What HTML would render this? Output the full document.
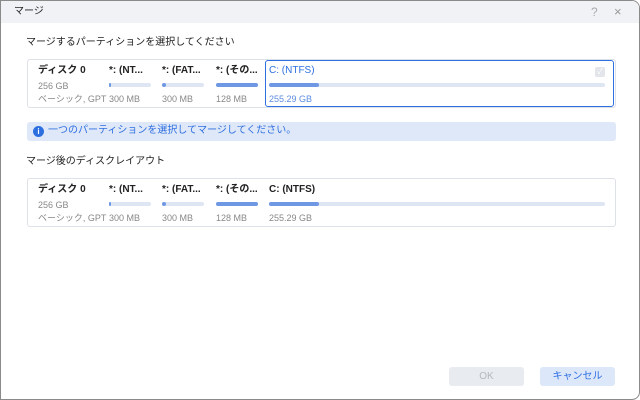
<!DOCTYPE html>
<html><head><meta charset="utf-8"><style>
*{margin:0;padding:0;box-sizing:border-box}
body{width:640px;height:400px;background:#fff;font-family:"Liberation Sans","Noto Sans CJK JP",sans-serif;position:relative;overflow:hidden}
.win{position:absolute;left:0;top:0;width:640px;height:400px;border:1px solid #8a8a8a;border-radius:0 8px 8px 0;background:#fff;overflow:hidden}
.tb{position:absolute;left:0;top:0;right:0;height:22px;background:#f0f2f6}
.t{position:absolute;font-size:10px;line-height:12px;color:#222;white-space:nowrap}
.box{position:absolute;left:26px;width:589px;height:49px;border:1px solid #dde1e8;border-radius:3px}
.bar{position:absolute;height:4px;background:#dfe6f3;border-radius:2px}
.fill{position:absolute;left:0;top:0;height:4px;background:#6f98e4;border-radius:2px}
.g{color:#888;font-size:9px}
.b{font-weight:bold;font-size:10px}
</style></head><body><div class="win">
<div class="tb"></div>
<div class="t" style="left:13px;top:5px">マージ</div>
<div class="t" style="left:590px;top:5px;color:#aaa;font-size:12px">?</div>
<div class="t" style="left:613px;top:5px;color:#999;font-size:13px">×</div>
<div class="t" style="left:25px;top:36px">マージするパーティションを選択してください</div>

<div class="box" style="top:58px"></div>
<div class="t b" style="left:37px;top:64px">ディスク 0</div>
<div class="t g" style="left:37px;top:79px">256 GB</div>
<div class="t g" style="left:37px;top:92px">ベーシック, GPT</div>
<div class="t b" style="left:108px;top:64px">*: (NT...</div>
<div class="bar" style="left:108px;top:82px;width:42px"><div class="fill" style="width:2px"></div></div>
<div class="t g" style="left:108px;top:92px">300 MB</div>
<div class="t b" style="left:161px;top:64px">*: (FAT...</div>
<div class="bar" style="left:161px;top:82px;width:42px"><div class="fill" style="width:4px"></div></div>
<div class="t g" style="left:161px;top:92px">300 MB</div>
<div class="t b" style="left:215px;top:64px">*: (その...</div>
<div class="bar" style="left:215px;top:82px;width:42px"><div class="fill" style="width:42px"></div></div>
<div class="t g" style="left:215px;top:92px">128 MB</div>
<div style="position:absolute;left:264px;top:59px;width:349px;height:47px;border:1.5px solid #2e6fe0;border-radius:3px"></div>
<div class="t b" style="left:268px;top:64px;color:#2e6fe0;font-weight:normal">C: (NTFS)</div>
<div style="position:absolute;left:594px;top:66px;width:10px;height:10px;background:#e3e5ea;border-radius:2px;color:#fff;font-size:8px;line-height:10px;text-align:center">✓</div>
<div class="bar" style="left:268px;top:82px;width:336px"><div class="fill" style="width:50px"></div></div>
<div class="t g" style="left:268px;top:92px;color:#5b8be0">255.29 GB</div>

<div style="position:absolute;left:26px;top:121px;width:589px;height:19px;background:#dfe8f8;border-radius:3px"></div>
<div style="position:absolute;left:32px;top:125px;width:11px;height:11px;border-radius:50%;background:#2e6fe0;color:#fff;font-size:8px;line-height:11px;text-align:center;font-weight:bold">i</div>
<div class="t" style="left:47px;top:124px;color:#2e6fe0">一つのパーティションを選択してマージしてください。</div>

<div class="t" style="left:25px;top:155px">マージ後のディスクレイアウト</div>
<div class="box" style="top:177px"></div>
<div class="t b" style="left:37px;top:183px">ディスク 0</div>
<div class="t g" style="left:37px;top:198px">256 GB</div>
<div class="t g" style="left:37px;top:211px">ベーシック, GPT</div>
<div class="t b" style="left:108px;top:183px">*: (NT...</div>
<div class="bar" style="left:108px;top:201px;width:42px"><div class="fill" style="width:2px"></div></div>
<div class="t g" style="left:108px;top:211px">300 MB</div>
<div class="t b" style="left:161px;top:183px">*: (FAT...</div>
<div class="bar" style="left:161px;top:201px;width:42px"><div class="fill" style="width:4px"></div></div>
<div class="t g" style="left:161px;top:211px">300 MB</div>
<div class="t b" style="left:215px;top:183px">*: (その...</div>
<div class="bar" style="left:215px;top:201px;width:42px"><div class="fill" style="width:42px"></div></div>
<div class="t g" style="left:215px;top:211px">128 MB</div>
<div class="t b" style="left:268px;top:183px">C: (NTFS)</div>
<div class="bar" style="left:268px;top:201px;width:336px"><div class="fill" style="width:50px"></div></div>
<div class="t g" style="left:268px;top:211px">255.29 GB</div>

<div style="position:absolute;left:448px;top:366px;width:75px;height:19px;background:#e8ebf0;border-radius:3px;color:#b5b8bf;font-size:10px;line-height:19px;text-align:center">OK</div>
<div style="position:absolute;left:539px;top:366px;width:75px;height:19px;background:#dce7fa;border-radius:3px;color:#2e6fe0;font-size:10px;line-height:19px;text-align:center">キャンセル</div>
</div></body></html>
